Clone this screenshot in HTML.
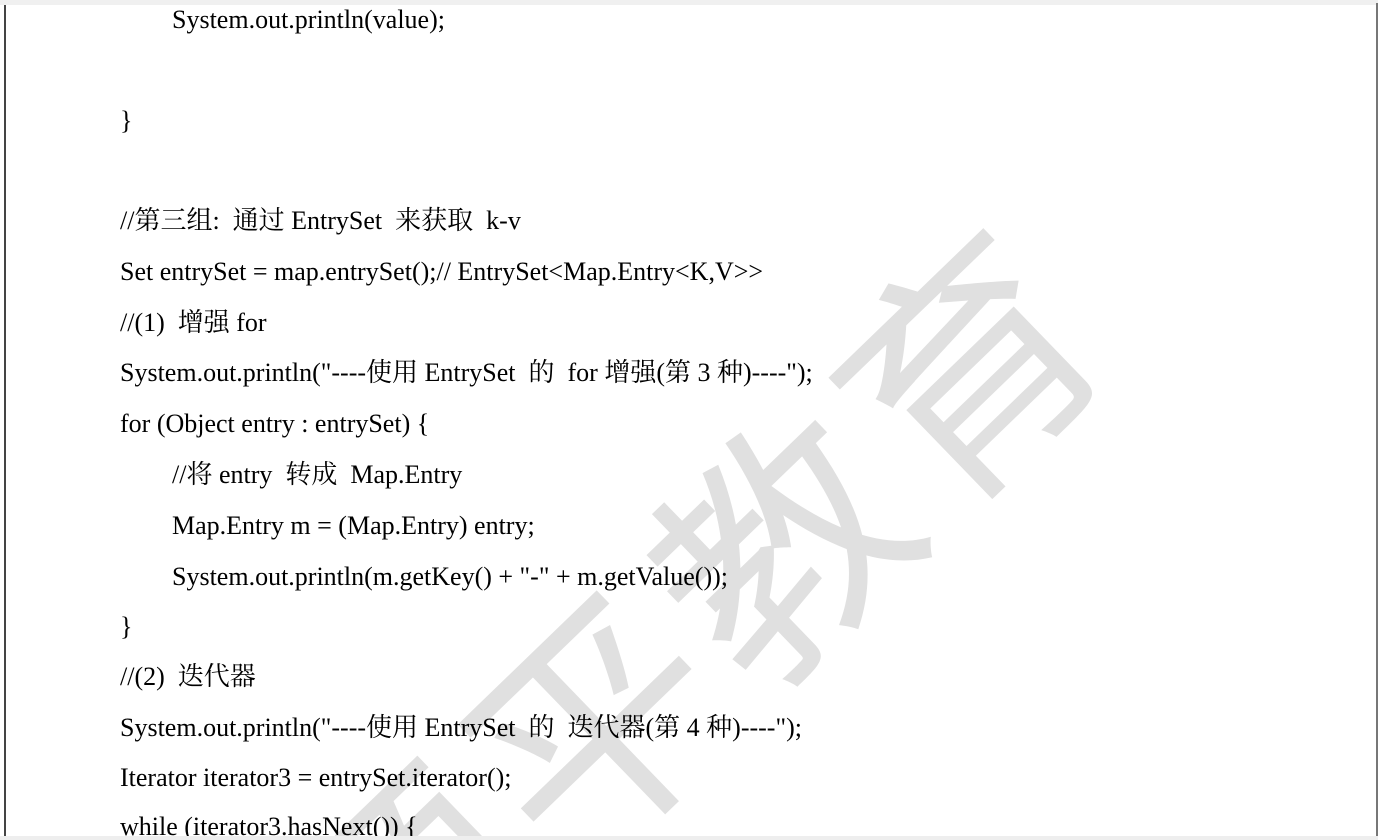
<!DOCTYPE html>
<html><head><meta charset="utf-8"><style>
html,body{margin:0;padding:0;width:1378px;height:840px;overflow:hidden;}
body{background:#fff;position:relative;}
.top{position:absolute;left:0;top:0;width:1378px;height:5px;background:#f0f0f0;}
.bot{position:absolute;left:0;top:836px;width:1378px;height:4px;background:#eeeeee;}
.lb{position:absolute;left:4px;top:5px;width:2px;height:831px;background:#444;}
.rb{position:absolute;left:1376px;top:3px;width:2px;height:833px;background:#777;}
.wm{position:absolute;left:0;top:0;width:1378px;height:840px;overflow:hidden;}
.wm span{position:absolute;left:590px;top:712px;transform:translate(-50%,-50%) rotate(-44deg);white-space:nowrap;font-family:"Noto Sans CJK SC",sans-serif;font-size:245px;letter-spacing:14px;color:#e0e0e0;line-height:1;}
.l{position:absolute;font-family:"Liberation Serif","Noto Serif CJK SC",serif;font-size:26px;line-height:30px;color:#000;white-space:pre;}
</style></head><body>
<div class="top"></div>
<div class="wm"><span>韩顺平教育</span></div>
<div class="l" style="left:172px;top:5px">System.out.println(value);</div>
<div class="l" style="left:120px;top:106px">}</div>
<div class="l" style="left:120px;top:206px">//第三组:  通过 EntrySet  来获取  k-v</div>
<div class="l" style="left:120px;top:257px">Set entrySet = map.entrySet();// EntrySet&lt;Map.Entry&lt;K,V&gt;&gt;</div>
<div class="l" style="left:120px;top:308px">//(1)  增强 for</div>
<div class="l" style="left:120px;top:358px">System.out.println("----使用 EntrySet  的  for 增强(第 3 种)----");</div>
<div class="l" style="left:120px;top:409px">for (Object entry : entrySet) {</div>
<div class="l" style="left:172px;top:460px">//将 entry  转成  Map.Entry</div>
<div class="l" style="left:172px;top:511px">Map.Entry m = (Map.Entry) entry;</div>
<div class="l" style="left:172px;top:562px">System.out.println(m.getKey() + "-" + m.getValue());</div>
<div class="l" style="left:120px;top:612px">}</div>
<div class="l" style="left:120px;top:662px">//(2)  迭代器</div>
<div class="l" style="left:120px;top:713px">System.out.println("----使用 EntrySet  的  迭代器(第 4 种)----");</div>
<div class="l" style="left:120px;top:763px">Iterator iterator3 = entrySet.iterator();</div>
<div class="l" style="left:120px;top:812px;height:24px;overflow:hidden">while (iterator3.hasNext()) {</div>
<div class="lb"></div><div class="rb"></div><div class="bot"></div>
</body></html>
